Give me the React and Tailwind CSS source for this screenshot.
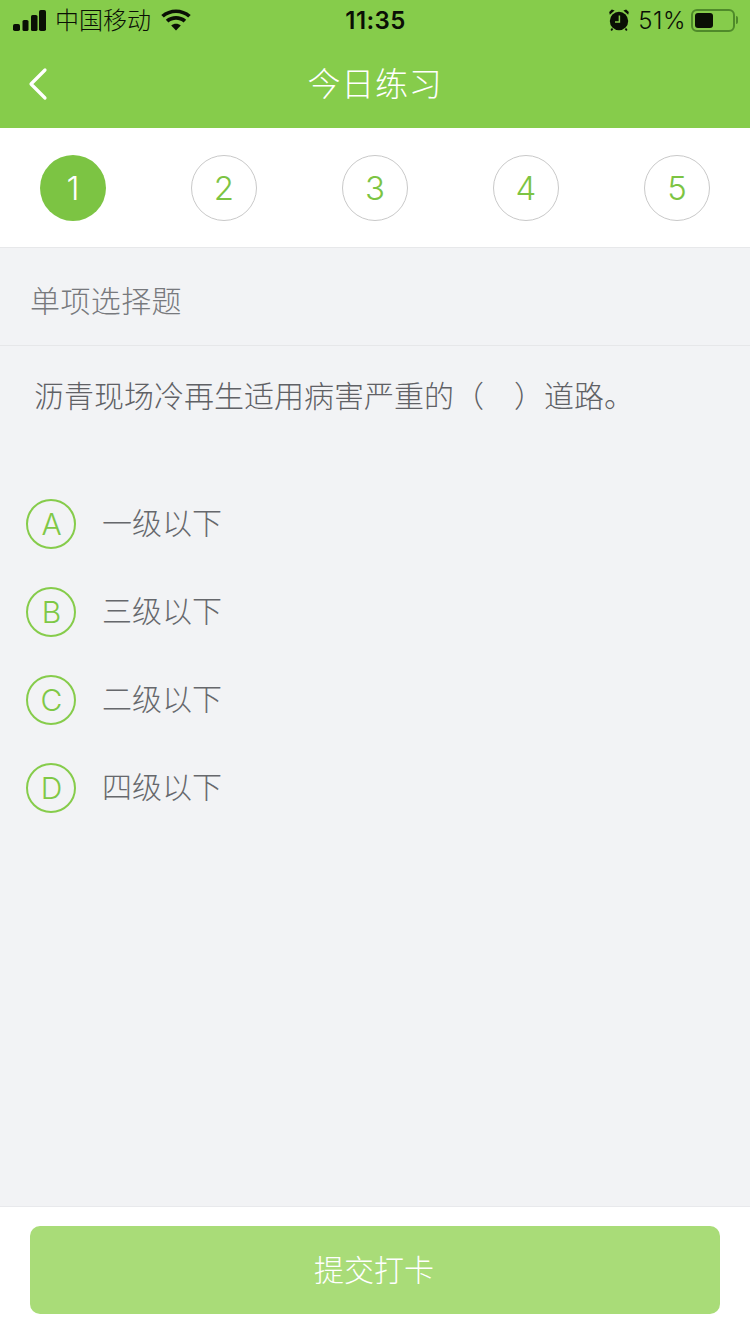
import React from "react";
import { ChevronLeft } from "lucide-react";

const font = "font-['Inter','Noto_Sans_CJK_SC',sans-serif]";

const steps = [1, 2, 3, 4, 5];
const options = [
  { key: "A", text: "一级以下" },
  { key: "B", text: "三级以下" },
  { key: "C", text: "二级以下" },
  { key: "D", text: "四级以下" },
];

const Signal = () => (
  <svg width="33" height="21" viewBox="0 0 33 21" className="block">
    <rect x="0" y="14" width="7" height="7" rx="1.8" fill="#0a0f05" />
    <rect x="9.5" y="10" width="6" height="11" rx="1.6" fill="#0a0f05" />
    <rect x="18" y="5" width="6.5" height="16" rx="1.6" fill="#0a0f05" />
    <rect x="26" y="0" width="7" height="21" rx="1.8" fill="#0a0f05" />
  </svg>
);

const Wifi = () => (
  <svg width="30" height="22" viewBox="0 0 30 22" className="block">
    <path d="M15 21.5 L10.2 16.4 C12.9 14.1 17.1 14.1 19.8 16.4 Z" fill="#0a0f05" />
    <path d="M7.4 13.4 L4.8 10.7 C10.5 5.8 19.5 5.8 25.2 10.7 L22.6 13.4 C18.3 9.7 11.7 9.7 7.4 13.4 Z" fill="#0a0f05" />
    <path d="M2.8 8.6 L0.3 6 C8.6 -1.4 21.4 -1.4 29.7 6 L27.2 8.6 C20.3 2.5 9.7 2.5 2.8 8.6 Z" fill="#0a0f05" />
  </svg>
);

const Alarm = () => (
  <svg width="20" height="22" viewBox="0 0 20 22" className="block">
    <circle cx="10" cy="12" r="9.2" fill="#0a0f05" />
    <path d="M0.8 5.8 L5.6 1.6 L2.8 0.6 L0.2 3 Z" fill="#0a0f05" />
    <path d="M19.2 5.8 L14.4 1.6 L17.2 0.6 L19.8 3 Z" fill="#0a0f05" />
    <path d="M3.5 19.5 L2.2 21.5 M16.5 19.5 L17.8 21.5" stroke="#0a0f05" strokeWidth="1.8" />
    <path d="M10.4 6.5 V13 H6" stroke="#86cc4b" strokeWidth="1.5" fill="none" />
  </svg>
);

const Battery = () => (
  <div className="flex items-center gap-[1px]">
    <div className="w-[44px] h-[23px] rounded-[6px] border-2 border-[#4f8a2a] p-[2px]">
      <div className="w-[18px] h-full rounded-[3px] bg-[#0a0f05]" />
    </div>
    <div className="w-[2px] h-[8px] rounded-r-full bg-[#4f8a2a]" />
  </div>
);

export default function App() {
  return (
    <div className={`w-[750px] h-[1334px] flex flex-col bg-[#f2f3f5] overflow-hidden ${font}`}>
      {/* Header */}
      <div className="bg-[#86cc4b] h-[128px] shrink-0">
        <div className="h-[40px] pl-[13px] pr-[12px] grid grid-cols-3 items-center text-[#0a0f05]">
          <div className="flex items-center">
            <Signal />
            <span className="ml-[9px] pt-[2px] text-[24px] leading-none font-light">中国移动</span>
            <span className="ml-[10px]"><Wifi /></span>
          </div>
          <div className="text-center text-[24px] font-semibold leading-none pt-[1px] tracking-[0.4px]">11:35</div>
          <div className="flex items-center justify-end">
            <Alarm />
            <span className="ml-[9px] mr-[5px] pt-[1px] text-[24px] leading-none font-light tracking-[0.5px]">51%</span>
            <Battery />
          </div>
        </div>
        <div className="relative h-[88px] flex items-center justify-center">
          <ChevronLeft
            size={56}
            strokeWidth={3.2}
            absoluteStrokeWidth
            className="absolute left-[10px] top-[16px] text-white"
          />
          <h1 className="text-white text-[33px] font-light tracking-[0.7px] pt-[2px]">今日练习</h1>
        </div>
      </div>

      {/* Steps */}
      <div className="h-[120px] shrink-0 bg-white border-b border-[#e7e8ea] px-[40px] pt-[27px] flex justify-between items-start">
        {steps.map((n) =>
          n === 1 ? (
            <div
              key={n}
              className="w-[66px] h-[66px] pt-[1px] rounded-full bg-[#7cc443] text-white text-[33px] font-light flex items-center justify-center"
            >
              {n}
            </div>
          ) : (
            <div
              key={n}
              className="w-[66px] h-[66px] pt-[1px] rounded-full border border-[#c9c9c9] text-[#7cc443] text-[33px] font-[350] flex items-center justify-center"
            >
              {n}
            </div>
          )
        )}
      </div>

      {/* Question */}
      <div className="h-[98px] shrink-0 border-b border-[#e6e7e9] pl-[30px] pt-[10px] flex items-center text-[#77797d] text-[30px] tracking-[0.4px] font-light">
        单项选择题
      </div>
      <p className="pl-[34px] pt-[28px] text-[#5f6165] text-[30px] leading-[44px] font-light whitespace-pre">
        沥青现场冷再生适用病害严重的（<span className="inline-block w-[30px]" />）道路。
      </p>

      {/* Options */}
      <div className="mt-[62px] flex flex-col flex-1">
        {options.map((o) => (
          <div key={o.key} className="h-[88px] pl-[26px] flex items-center gap-[26px]">
            <div className="w-[50px] h-[50px] pl-[1px] rounded-full border-2 border-[#86cc4b] text-[#7fc846] text-[30px] font-[350] flex items-center justify-center">
              {o.key}
            </div>
            <span className="text-[#66686c] text-[30px] font-light pb-[2px]">{o.text}</span>
          </div>
        ))}
      </div>

      {/* Submit */}
      <div className="h-[128px] shrink-0 bg-white border-t border-[#e8e9ec] px-[30px] pt-[19px]">
        <button className="w-full h-[88px] pr-[2px] rounded-[10px] bg-[#a9dc78] text-white text-[30px] font-light">
          提交打卡
        </button>
      </div>
    </div>
  );
}
